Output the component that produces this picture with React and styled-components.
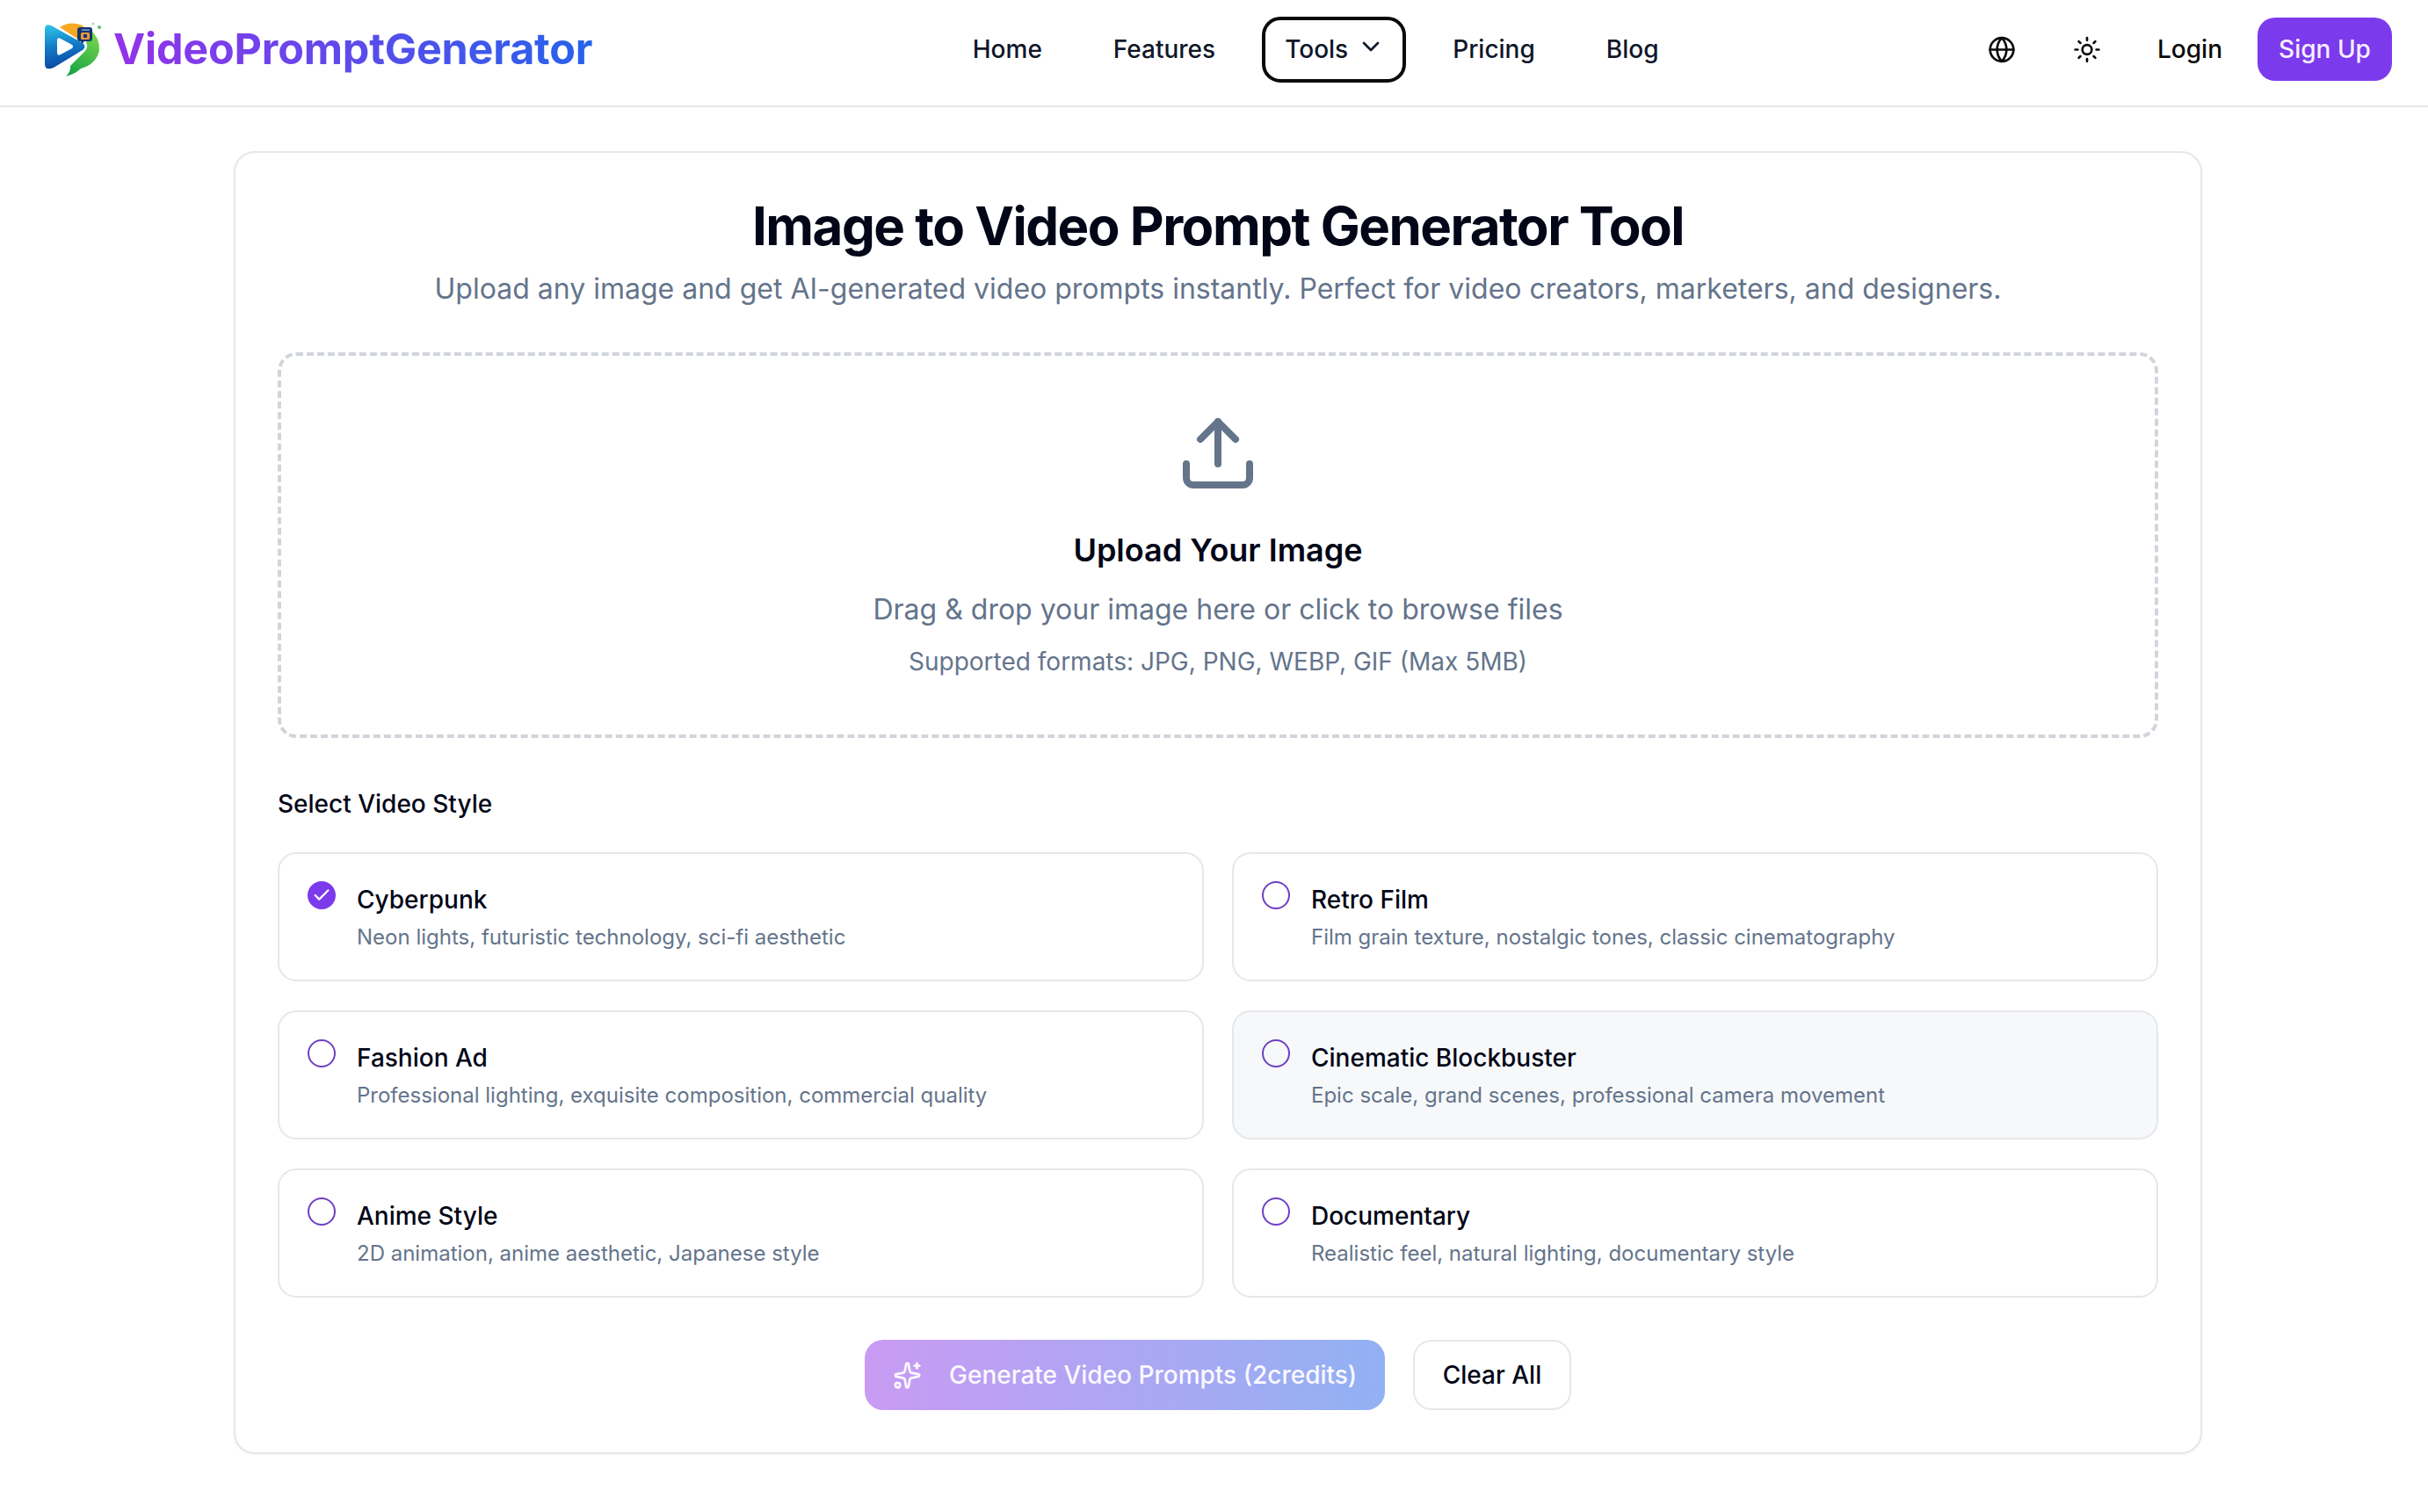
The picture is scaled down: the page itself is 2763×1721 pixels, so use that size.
import React from 'react';
import styled, { createGlobalStyle } from 'styled-components';
import { ChevronDown, Globe, Sun, Upload, Sparkles, Check } from 'lucide-react';

const Global = createGlobalStyle`
  * { box-sizing: border-box; }
  html, body { margin: 0; padding: 0; background: #fff; }
  body { font-family: Inter, "Liberation Sans", sans-serif; color: #020617; }
`;

const Page = styled.div`
  display: flex;
  flex-direction: column;
  min-height: 1721px;
  background: #fff;
`;

const Header = styled.header`
  display: flex;
  align-items: center;
  justify-content: space-between;
  height: 122px;
  padding: 0 41px 8px 48px;
  border-bottom: 2px solid #e5e7eb;
  background: #fff;
`;

const Brand = styled.a`
  display: flex;
  align-items: center;
  gap: 13px;
`;

const Wordmark = styled.span`
  font-size: 48.5px;
  font-weight: 700;
  line-height: 60px;
  letter-spacing: -0.2px;
  background: linear-gradient(90deg, #9333ea, #2563eb);
  -webkit-background-clip: text;
  background-clip: text;
  color: transparent;
`;

const Nav = styled.nav`
  display: flex;
  align-items: center;
  gap: 25px;
  margin-left: 58px;
`;

const NavItem = styled.a`
  display: flex;
  align-items: center;
  gap: 10px;
  height: 75px;
  padding: ${(p) => (p.$active ? '0 20px 0 22px' : '0 28px')};
  font-size: 28px;
  font-weight: 500;
  color: #0f172a;
  border: ${(p) => (p.$active ? '4px solid #0a0a0a' : 'none')};
  border-radius: 21px;
  svg { margin-top: -7px; }
`;

const Actions = styled.div`
  display: flex;
  align-items: center;
`;

const IconButton = styled.button`
  display: flex;
  align-items: center;
  justify-content: center;
  width: 32px;
  height: 32px;
  padding: 0;
  margin-right: ${(p) => p.$gap}px;
  background: none;
  border: none;
  color: #0a0a0a;
`;

const Login = styled.a`
  font-size: 28px;
  font-weight: 500;
  color: #0a0a0a;
  margin-right: 40px;
`;

const SignUp = styled.button`
  width: 153px;
  height: 72px;
  border: none;
  border-radius: 20px;
  background: #7c3aed;
  color: #f5f0ff;
  font: 500 28px Inter, sans-serif;
`;

const Card = styled.main`
  width: 2240px;
  margin: 50px 257px 0 266px;
  padding: 48px 48px;
  background: #fff;
  border: 2px solid #e5e7eb;
  border-radius: 24px;
  box-shadow: 0 1px 3px rgba(15, 23, 42, 0.05);
`;

const Title = styled.h1`
  margin: 0;
  text-align: center;
  font-size: 60px;
  line-height: 70px;
  font-weight: 700;
  letter-spacing: -1.5px;
  color: #020617;
`;

const Subtitle = styled.p`
  margin: 13px 0 48px;
  text-align: center;
  font-size: 32px;
  line-height: 48px;
  color: #64748b;
`;

const Dropzone = styled.div`
  display: flex;
  flex-direction: column;
  align-items: center;
  height: 439px;
  padding-top: 63px;
  border: 4px dashed #d1d5db;
  border-radius: 21px;
`;

const UploadIcon = styled(Upload)`
  color: #64748b;
  display: block;
`;

const DropTitle = styled.h3`
  margin: 35px 0 0;
  font-size: 36px;
  line-height: 54px;
  font-weight: 600;
  color: #020617;
`;

const DropText = styled.p`
  margin: 14px 0 0;
  font-size: 32px;
  line-height: 54px;
  color: #64748b;
`;

const DropHint = styled.p`
  margin: 8px 0 0;
  font-size: 28px;
  line-height: 48px;
  color: #64748b;
`;

const SectionLabel = styled.h4`
  margin: 55px 0 35px;
  font-size: 28px;
  line-height: 40px;
  font-weight: 500;
  color: #020617;
`;

const StyleGrid = styled.div`
  display: grid;
  grid-template-columns: 1fr 1fr;
  gap: 33px 32px;
`;

const StyleCard = styled.label`
  display: flex;
  gap: 24px;
  height: 147px;
  padding: 31px 32px;
  border: 2px solid #e5e7eb;
  border-radius: 21px;
  background: ${(p) => (p.$hover ? '#f6f8fa' : '#fff')};
`;

const Radio = styled.span`
  flex: none;
  display: flex;
  align-items: center;
  justify-content: center;
  width: 32px;
  height: 32px;
  border-radius: 50%;
  border: 2.5px solid #6d3fc4;
  background: ${(p) => (p.$checked ? '#7c3aed' : 'transparent')};
  border-color: ${(p) => (p.$checked ? '#7c3aed' : '#6d3fc4')};
  color: #fff;
`;

const StyleText = styled.div`
  display: flex;
  flex-direction: column;
  padding-top: 1px;
`;

const StyleName = styled.span`
  font-size: 28px;
  line-height: 40px;
  font-weight: 500;
  color: #020617;
`;

const StyleDesc = styled.span`
  margin-top: 3px;
  font-size: 24px;
  line-height: 40px;
  color: #64748b;
`;

const Buttons = styled.div`
  display: flex;
  justify-content: center;
  gap: 32px;
  margin-top: 48px;
`;

const Generate = styled.button`
  display: flex;
  align-items: center;
  gap: 31px;
  width: 592px;
  height: 80px;
  padding: 0 0 0 32px;
  border: none;
  border-radius: 21px;
  background: linear-gradient(90deg, #c99bf3, #91b1f3);
  color: #fbf8ff;
  font: 500 28px Inter, sans-serif;
`;

const Clear = styled.button`
  width: 180px;
  height: 80px;
  border: 2px solid #e5e7eb;
  border-radius: 21px;
  background: #fff;
  color: #020617;
  font: 500 28px Inter, sans-serif;
`;

const Logo = () => (
  <svg width="68" height="70" viewBox="0 0 68 70" aria-hidden="true">
    <defs>
      <linearGradient id="lb" x1="0.3" y1="0" x2="0.45" y2="1">
        <stop offset="0" stopColor="#2cc0e6" />
        <stop offset="0.5" stopColor="#1279c8" />
        <stop offset="1" stopColor="#0c459e" />
      </linearGradient>
      <linearGradient id="lg" x1="0.7" y1="0" x2="0.3" y2="1">
        <stop offset="0" stopColor="#7ad64a" />
        <stop offset="1" stopColor="#18a546" />
      </linearGradient>
    </defs>
    <path d="M20 10Q32 2 46 8L50 14L46 27Z" fill="#f6a823" />
    <path d="M54 12Q66 22 65 36Q62 52 44 57Q38 63 27 66Q33 60 32 54L48 38Q53 33 50 27Z" fill="url(#lg)" />
    <path d="M3 13Q3 5 10 8L46 28Q51 32 46 36L13 56Q3 60 3 52Z" fill="url(#lb)" />
    <path d="M17 25Q17 21 21 23L34 30Q36 32 34 34L21 41Q17 43 17 39Z" fill="#fff" />
    <path d="M43 10H54Q57 10 57 13V23Q57 26 54 26H48L45.500 29L44 26H43Q40 26 40 23V13Q40 10 43 10Z" fill="#15346f" />
    <rect x="44" y="16" width="10" height="8" rx="1.500" fill="#e89a3c" />
    <circle cx="49" cy="20" r="2.300" fill="#15346f" />
    <rect x="45" y="12.500" width="9" height="1.300" fill="#8fb6e8" />
    <circle cx="58" cy="6" r="1.500" fill="#a9dca0" />
    <circle cx="65" cy="10" r="2" fill="#5cc26a" />
  </svg>
);

const styles = [
  { name: 'Cyberpunk', desc: 'Neon lights, futuristic technology, sci-fi aesthetic', checked: true },
  { name: 'Retro Film', desc: 'Film grain texture, nostalgic tones, classic cinematography' },
  { name: 'Fashion Ad', desc: 'Professional lighting, exquisite composition, commercial quality' },
  { name: 'Cinematic Blockbuster', desc: 'Epic scale, grand scenes, professional camera movement', hover: true },
  { name: 'Anime Style', desc: '2D animation, anime aesthetic, Japanese style' },
  { name: 'Documentary', desc: 'Realistic feel, natural lighting, documentary style' },
];

export default function App() {
  return (
    <Page>
      <Global />
      <Header>
        <Brand>
          <Logo />
          <Wordmark>VideoPromptGenerator</Wordmark>
        </Brand>
        <Nav>
          <NavItem>Home</NavItem>
          <NavItem>Features</NavItem>
          <NavItem $active>
            Tools
            <ChevronDown size={32} strokeWidth={2} />
          </NavItem>
          <NavItem>Pricing</NavItem>
          <NavItem>Blog</NavItem>
        </Nav>
        <Actions>
          <IconButton $gap={65}><Globe size={33} strokeWidth={2} /></IconButton>
          <IconButton $gap={64}><Sun size={33} strokeWidth={2} /></IconButton>
          <Login>Login</Login>
          <SignUp>Sign Up</SignUp>
        </Actions>
      </Header>
      <Card>
        <Title>Image to Video Prompt Generator Tool</Title>
        <Subtitle>Upload any image and get AI-generated video prompts instantly. Perfect for video creators, marketers, and designers.</Subtitle>
        <Dropzone>
          <UploadIcon size={96} strokeWidth={2} />
          <DropTitle>Upload Your Image</DropTitle>
          <DropText>Drag &amp; drop your image here or click to browse files</DropText>
          <DropHint>Supported formats: JPG, PNG, WEBP, GIF (Max 5MB)</DropHint>
        </Dropzone>
        <SectionLabel>Select Video Style</SectionLabel>
        <StyleGrid>
          {styles.map((s) => (
            <StyleCard key={s.name} $hover={s.hover}>
              <Radio $checked={s.checked}>
                {s.checked && <Check size={22} strokeWidth={2.5} />}
              </Radio>
              <StyleText>
                <StyleName>{s.name}</StyleName>
                <StyleDesc>{s.desc}</StyleDesc>
              </StyleText>
            </StyleCard>
          ))}
        </StyleGrid>
        <Buttons>
          <Generate>
            <Sparkles size={33} strokeWidth={2} />
            Generate Video Prompts (2credits)
          </Generate>
          <Clear>Clear All</Clear>
        </Buttons>
      </Card>
    </Page>
  );
}
